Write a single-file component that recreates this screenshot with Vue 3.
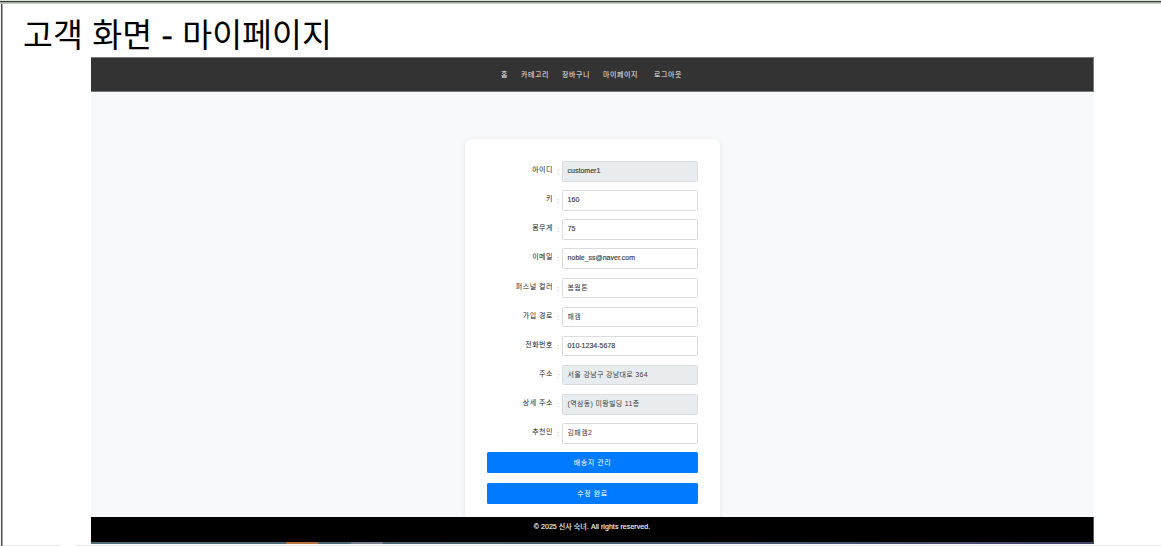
<script setup>
const menu = ['홈', '카테고리', '장바구니', '마이페이지', '로그아웃']
const fields = [
  { label: '아이디', value: 'customer1', locked: true, latin: true },
  { label: '키', value: '160', latin: true },
  { label: '몸무게', value: '75', latin: true },
  { label: '이메일', value: 'noble_ss@naver.com', latin: true },
  { label: '퍼스널 컬러', value: '봄웜톤' },
  { label: '가입 경로', value: '패캠' },
  { label: '전화번호', value: '010-1234-5678', latin: true },
  { label: '주소', value: '서울 강남구 강남대로 364', locked: true },
  { label: '상세 주소', value: '(역삼동) 미왕빌딩 11층', locked: true },
  { label: '추천인', value: '김패캠2' }
]
</script>

<template>
  <div class="slide">
    <h1>고객 화면 <span>-</span> 마이페이지</h1>
    <div class="screen">
      <nav>
        <span v-for="item in menu" :key="item">{{ item }}</span>
      </nav>
      <main>
        <form class="card" @submit.prevent>
          <div v-for="f in fields" :key="f.label" class="row">
            <label>{{ f.label }}</label>
            <i>:</i>
            <div class="field" :class="{ locked: f.locked, latin: f.latin }">{{ f.value }}</div>
          </div>
          <button type="button">배송지 관리</button>
          <button type="submit">수정 완료</button>
        </form>
      </main>
      <footer>© 2025 신사 숙녀. All rights reserved.</footer>
      <div class="taskbar"><b></b><em></em></div>
    </div>
    <div class="bottom"><span></span><span></span></div>
  </div>
</template>

<style>
body { background: #fff; }
</style>

<style scoped>
* { box-sizing: border-box; }
.slide {
  position: relative;
  width: 1161px;
  height: 546px;
  overflow: hidden;
  display: flex;
  flex-direction: column;
  background: linear-gradient(#dde2db 0 1px, #3c403c 1px 2px, #a5aaa5 2px 3px, #c5c9c4 3px 4px, transparent 4px),
    linear-gradient(90deg, #f4f4f4 0 1px, #4e5150 1px 2px, #a2a5a4 2px 3px, #fff 3px);
  font-family: "Liberation Sans", "Noto Sans CJK KR", sans-serif;
}
h1 {
  margin: 0;
  height: 57px;
  padding: 9px 0 0 23px;
  font: 400 32.5px/48px "Noto Sans CJK KR", sans-serif;
  word-spacing: 2.2px;
  color: #000;
  white-space: nowrap;
}
h1 span { -webkit-text-stroke: .5px #000; }
.screen {
  width: 1003px;
  height: 487px;
  margin-left: 91px;
  display: flex;
  flex-direction: column;
}
nav {
  height: 35px;
  flex: none;
  border: solid #767b79;
  border-width: 1px 1px 1px 0;
  background: #333;
  display: flex;
  justify-content: center;
  gap: 13px;
  padding-right: 1px;
  color: #eee;
  font-size: 7px;
  line-height: 33px;
  letter-spacing: .55px;
}
nav span:last-child { margin-left: 3px; }
main {
  height: 425px;
  flex: none;
  background: #f8f9fb;
  overflow: hidden;
  padding-top: 47px;
}
.card {
  width: 255px;
  height: 420px;
  margin-left: 374px;
  padding: 22px 22px 0;
  border-radius: 7px;
  background: #fff;
  box-shadow: 0 1px 6px rgba(0, 0, 0, .08);
}
.row {
  height: 29.15px;
  display: flex;
}
label {
  width: 66px;
  text-align: right;
  font-size: 7px;
  line-height: 18.4px;
  letter-spacing: .5px;
  color: #222;
  white-space: nowrap;
}
i {
  width: 9px;
  padding-left: 4px;
  font: 7px/21px "Liberation Sans", sans-serif;
  color: #8c9298;
}
.field {
  width: 136px;
  height: 20.5px;
  padding-left: 4.6px;
  border: 1px solid #d9dde2;
  border-radius: 1.5px;
  font-size: 7px;
  line-height: 18.5px;
  letter-spacing: .33px;
  color: #383d44;
  white-space: nowrap;
}
.latin { letter-spacing: 0; -webkit-text-stroke: .15px #383d44; }
.locked { background: #e9ecef; }
button {
  display: block;
  width: 211px;
  height: 21px;
  margin: 0 0 10px;
  padding: 0;
  border: 0;
  border-radius: 1.5px;
  background: #007bff;
  color: #fff;
  font: 7px/20px "Liberation Sans", "Noto Sans CJK KR", sans-serif;
  letter-spacing: .6px;
}
footer {
  height: 25px;
  flex: none;
  background: #000;
  border-right: 1px solid #555;
  color: #f2f2f2;
  -webkit-text-stroke: .15px #f2f2f2;
  text-align: center;
  font-size: 7px;
  line-height: 20px;
  letter-spacing: .07px;
}
.taskbar {
  height: 2px;
  flex: none;
  display: flex;
  background: linear-gradient(90deg, #536b79, #4a5f70 50%, #40466b);
}
.taskbar b { width: 32px; margin-left: 195px; background: #b8743f; }
.taskbar em { width: 32px; margin-left: 33px; background: #77808a; }
.bottom {
  display: flex;
  height: 1px;
  margin: 1px 0 0 3px;
  gap: 16px;
}
.bottom span { background: #e5e5e5; width: 57px; }
.bottom span + span { flex: 1; }
</style>
